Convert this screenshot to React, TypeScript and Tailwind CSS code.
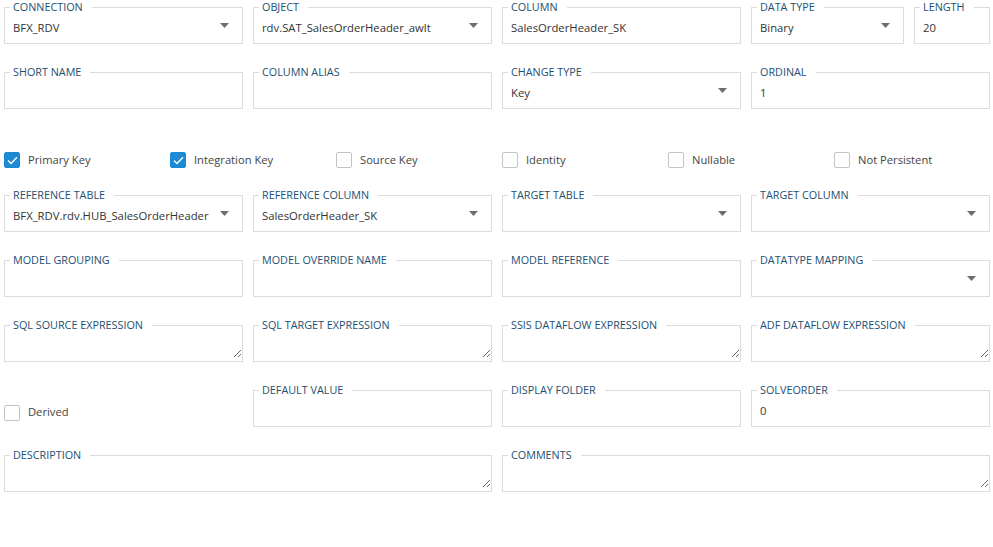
import { ReactNode } from "react";

const font = { fontFamily: '"Open Sans", "Noto Sans", sans-serif' };

function Caret() {
  return (
    <svg width="9" height="5" viewBox="0 0 9 5" className="mt-[9px] mr-[13px] ml-[4px] flex-none self-start">
      <polygon points="0,0 9,0 4.5,5" fill="#6e6e6e" />
    </svg>
  );
}

function Field({
  label,
  value,
  select,
  area,
  className = "",
}: {
  label: string;
  value?: string;
  select?: boolean;
  area?: boolean;
  className?: string;
}) {
  return (
    <fieldset className={`min-w-0 border border-[#dcdcdc] pl-[5px] pr-0 pb-0 ${className}`}>
      <legend className="pl-[3px] pr-[9px] text-[10.8px] leading-[14px] text-[#1d4f73] uppercase">
        {label}
      </legend>
      {area ? (
        <textarea
          readOnly
          className="block h-[26px] w-full resize-y bg-white pl-[3px] text-[11.3px] text-[#333] outline-none mb-[3px]"
        />
      ) : (
        <div className="flex h-[29px] items-center pl-[3px]">
          <span className="flex-1 truncate text-[11.3px] text-[#333]">{value}</span>
          {select && <Caret />}
        </div>
      )}
    </fieldset>
  );
}

function Check({ label, checked }: { label: string; checked?: boolean }) {
  return (
    <label className="flex items-center gap-[8px]">
      <span
        className={`flex h-[16px] w-[16px] flex-none items-center justify-center rounded-[2px] border ${
          checked ? "border-[#1e8ad6] bg-[#1e8ad6]" : "border-[#c4c4c4] bg-white"
        }`}
      >
        {checked && (
          <svg width="11" height="9" viewBox="0 0 11 9">
            <path d="M1 4.6 L4 7.5 L10 1.2" fill="none" stroke="#fff" strokeWidth="1.4" />
          </svg>
        )}
      </span>
      <span className="text-[11.2px] text-[#444]">{label}</span>
    </label>
  );
}

function Row({ children, className = "" }: { children: ReactNode; className?: string }) {
  return <div className={`grid grid-cols-[repeat(4,239px)] gap-x-[10px] ${className}`}>{children}</div>;
}

export default function App() {
  return (
    <div className="min-h-[547px] w-[993px] bg-white pl-[4px]" style={font}>
      <div className="flex flex-col gap-y-[21px]">
        <Row>
          <Field label="Connection" value="BFX_RDV" select />
          <Field label="Object" value="rdv.SAT_SalesOrderHeader_awlt" select />
          <Field label="Column" value="SalesOrderHeader_SK" />
          <div className="grid grid-cols-[153px_76px] gap-x-[10px]">
            <Field label="Data Type" value="Binary" select />
            <Field label="Length" value="20" />
          </div>
        </Row>
        <Row>
          <Field label="Short Name" />
          <Field label="Column Alias" />
          <Field label="Change Type" value="Key" select />
          <Field label="Ordinal" value="1" />
        </Row>
        <div className="grid h-[37px] grid-cols-[166px_166px_166px_166px_166px_1fr] items-start pt-[22px]">
          <Check label="Primary Key" checked />
          <Check label="Integration Key" checked />
          <Check label="Source Key" />
          <Check label="Identity" />
          <Check label="Nullable" />
          <Check label="Not Persistent" />
        </div>
        <Row>
          <Field label="Reference Table" value="BFX_RDV.rdv.HUB_SalesOrderHeader" select />
          <Field label="Reference Column" value="SalesOrderHeader_SK" select />
          <Field label="Target Table" select />
          <Field label="Target Column" select />
        </Row>
        <Row>
          <Field label="Model Grouping" />
          <Field label="Model Override Name" />
          <Field label="Model Reference" />
          <Field label="Datatype Mapping" select />
        </Row>
        <Row>
          <Field label="SQL Source Expression" area />
          <Field label="SQL Target Expression" area />
          <Field label="SSIS Dataflow Expression" area />
          <Field label="ADF Dataflow Expression" area />
        </Row>
        <Row>
          <div className="flex items-end pb-[6px]">
            <Check label="Derived" />
          </div>
          <Field label="Default Value" />
          <Field label="Display Folder" />
          <Field label="Solveorder" value="0" />
        </Row>
        <Row>
          <Field label="Description" area className="col-span-2" />
          <Field label="Comments" area className="col-span-2" />
        </Row>
      </div>
    </div>
  );
}
